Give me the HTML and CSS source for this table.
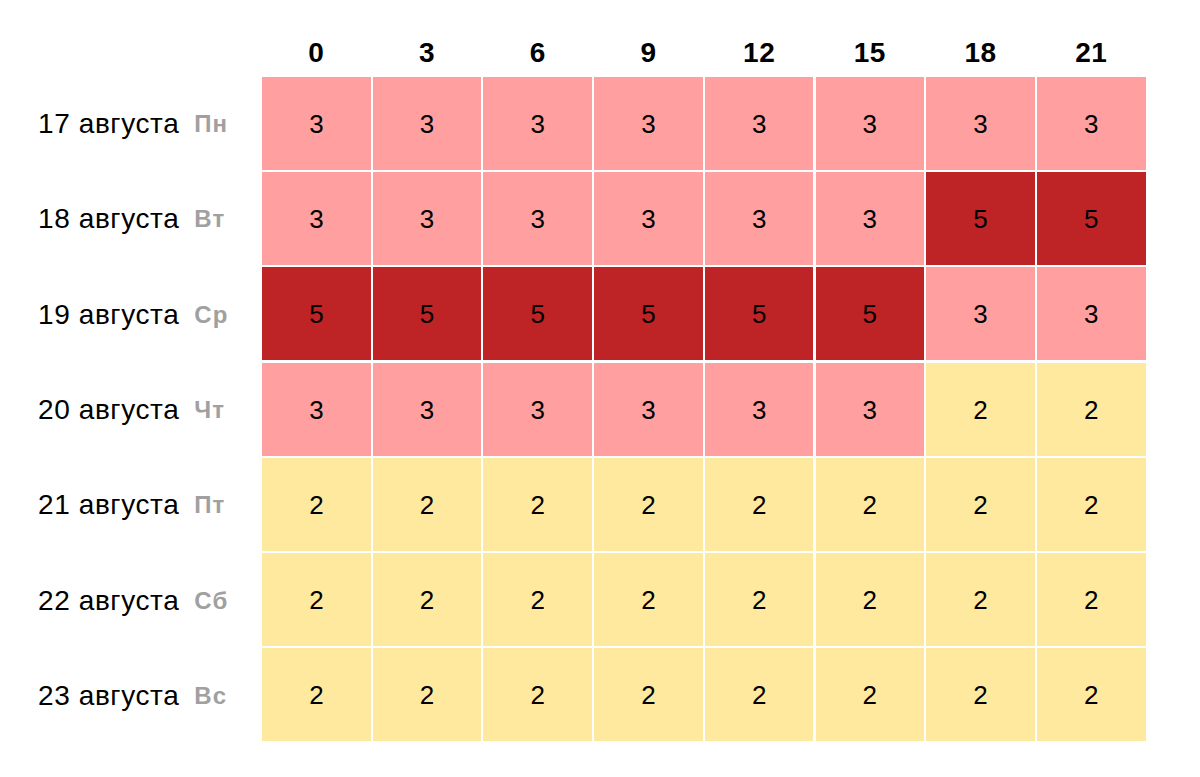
FILE: index.html
```html
<!DOCTYPE html>
<html lang="ru">
<head>
<meta charset="utf-8">
<title>Погода</title>
<link rel="stylesheet" href="styles.css">
</head>
<body>
<div class="table">
  <div class="corner"></div>
  <div class="hour">0</div><div class="hour">3</div><div class="hour">6</div><div class="hour">9</div><div class="hour">12</div><div class="hour">15</div><div class="hour">18</div><div class="hour">21</div>

  <div class="label"><span class="date">17 августа</span><span class="day">Пн</span></div>
  <div class="cell l3">3</div><div class="cell l3">3</div><div class="cell l3">3</div><div class="cell l3">3</div><div class="cell l3">3</div><div class="cell l3">3</div><div class="cell l3">3</div><div class="cell l3">3</div>

  <div class="label"><span class="date">18 августа</span><span class="day">Вт</span></div>
  <div class="cell l3">3</div><div class="cell l3">3</div><div class="cell l3">3</div><div class="cell l3">3</div><div class="cell l3">3</div><div class="cell l3">3</div><div class="cell l5">5</div><div class="cell l5">5</div>

  <div class="label"><span class="date">19 августа</span><span class="day">Ср</span></div>
  <div class="cell l5">5</div><div class="cell l5">5</div><div class="cell l5">5</div><div class="cell l5">5</div><div class="cell l5">5</div><div class="cell l5">5</div><div class="cell l3">3</div><div class="cell l3">3</div>

  <div class="label"><span class="date">20 августа</span><span class="day">Чт</span></div>
  <div class="cell l3">3</div><div class="cell l3">3</div><div class="cell l3">3</div><div class="cell l3">3</div><div class="cell l3">3</div><div class="cell l3">3</div><div class="cell l2">2</div><div class="cell l2">2</div>

  <div class="label"><span class="date">21 августа</span><span class="day">Пт</span></div>
  <div class="cell l2">2</div><div class="cell l2">2</div><div class="cell l2">2</div><div class="cell l2">2</div><div class="cell l2">2</div><div class="cell l2">2</div><div class="cell l2">2</div><div class="cell l2">2</div>

  <div class="label"><span class="date">22 августа</span><span class="day">Сб</span></div>
  <div class="cell l2">2</div><div class="cell l2">2</div><div class="cell l2">2</div><div class="cell l2">2</div><div class="cell l2">2</div><div class="cell l2">2</div><div class="cell l2">2</div><div class="cell l2">2</div>

  <div class="label"><span class="date">23 августа</span><span class="day">Вс</span></div>
  <div class="cell l2">2</div><div class="cell l2">2</div><div class="cell l2">2</div><div class="cell l2">2</div><div class="cell l2">2</div><div class="cell l2">2</div><div class="cell l2">2</div><div class="cell l2">2</div>
</div>
</body>
</html>
```

FILE: styles.css
```css
html, body {
  margin: 0;
  padding: 0;
  background: #ffffff;
}

body {
  font-family: "Liberation Sans", Arial, sans-serif;
  color: #000000;
}

.table {
  display: grid;
  grid-template-columns: 260px repeat(8, 108.6px);
  grid-template-rows: 74.4px repeat(7, 93px);
  column-gap: 2.1px;
  row-gap: 2.3px;
}

.hour {
  font-weight: bold;
  font-size: 28px;
  line-height: 28px;
  padding-top: 38.5px;
  text-align: center;
  letter-spacing: 0.5px;
}

.label {
  display: flex;
  align-items: center;
  padding-left: 38px;
  padding-top: 2px;
}

.date {
  font-size: 28px;
  letter-spacing: 0.6px;
}

.day {
  margin-left: 15px;
  font-size: 24px;
  font-weight: bold;
  color: #a0a0a0;
  letter-spacing: 1px;
}

.cell {
  display: flex;
  align-items: center;
  justify-content: center;
  padding-top: 2px;
  font-size: 26px;
}

.l2 { background: #ffe99e; }
.l3 { background: #ff9f9f; }
.l5 { background: #be2326; }
```
